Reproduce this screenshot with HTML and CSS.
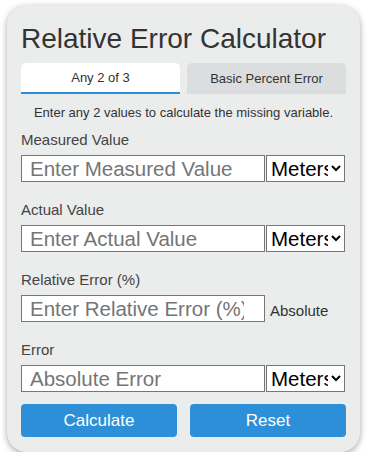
FILE: index.html
```html
<!DOCTYPE html>
<html lang="en">
<head>
    <meta charset="UTF-8">
    <title>Relative Error Calculator</title>
    <link rel="stylesheet" href="styles.css">
</head>

<body>
<div class="calc-box">
    <h1 class="calc-tit">Relative Error Calculator</h1>
    <ul class="calc-tab">
        <li class="active"><a href="#">Any 2 of 3</a></li>
        <li><a href="#">Basic Percent Error</a></li>
    </ul>
    <p class="calc-tip">Enter any 2 values to calculate the missing variable.</p>

    <div class="calc-item">
        <label for="measured">Measured Value</label>
        <div class="calc-row">
            <input type="text" id="measured" placeholder="Enter Measured Value">
            <select><option>Meters (m)</option></select>
        </div>
    </div>
    <div class="calc-item">
        <label for="actual">Actual Value</label>
        <div class="calc-row">
            <input type="text" id="actual" placeholder="Enter Actual Value">
            <select><option>Meters (m)</option></select>
        </div>
    </div>
    <div class="calc-item">
        <label for="relative">Relative Error (%)</label>
        <div class="calc-row">
            <input type="text" id="relative" placeholder="Enter Relative Error (%)">
            <span class="calc-side">Absolute</span>
        </div>
    </div>
    <div class="calc-item">
        <label for="absolute">Error</label>
        <div class="calc-row">
            <input type="text" id="absolute" placeholder="Absolute Error">
            <select><option>Meters (m)</option></select>
        </div>
    </div>

    <div class="calc-btns">
        <button type="button">Calculate</button>
        <button type="button">Reset</button>
    </div>
</div>
</body>
</html>
```

FILE: styles.css
```css
body,ul,p,h1{margin: 0; padding: 0}
body{font-family: "Liberation Sans", Arial, sans-serif; color: #333; background: #fff}
ul{list-style: none}
a{color: #333; text-decoration: none}

.calc-box{margin: 5px 0 0 7px; width: 325px; padding: 18px 14px 15px; background: #ebecec; border-radius: 20px; box-shadow: 0 2px 6px rgba(0,0,0,.35)}
.calc-tit{font-size: 28px; font-weight: normal; line-height: 31px; color: #333}

.calc-tab{display: flex; gap: 7px; margin-top: 9px}
.calc-tab li{width: 159px; height: 31px; border-radius: 5px 5px 0 0; background: #dcdddf; text-align: center; font-size: 13px; line-height: 31px; box-sizing: border-box}
.calc-tab li a{display: block}
.calc-tab li.active{background: #fff; border-bottom: 2px solid #2d8fd8; line-height: 30px}

.calc-tip{margin-top: 11px; font-size: 13px; line-height: 15px; text-align: center}

.calc-item{margin-top: 12px}
.calc-item + .calc-item{margin-top: 20px}
.calc-item label{display: block; font-size: 15px; line-height: 16px; color: #444}
.calc-row{display: flex; align-items: center; margin-top: 7px}
.calc-row input{width: 244px; height: 27px; box-sizing: border-box; margin: 0; padding: 0 20px 0 8px; border: 1px solid #767676; background: #fff; font: 20.5px "Liberation Sans", Arial, sans-serif; color: #000}
.calc-row input::placeholder{color: #757575}
.calc-row select{width: 79px; height: 27px; box-sizing: border-box; margin: 0 0 0 1px; padding: 0; border: 1px solid #767676; border-radius: 0; background: #fff; font: 20.5px "Liberation Sans", Arial, sans-serif; color: #000}
.calc-side{margin-left: 5px; padding-top: 4px; font-size: 15px; color: #333}

.calc-btns{display: flex; justify-content: space-between; margin-top: 12px}
.calc-btns button{width: 156px; height: 33px; border: none; border-radius: 4px; background: #2d8fd8; color: #fff; font: 17px "Liberation Sans", Arial, sans-serif; cursor: pointer}
```
